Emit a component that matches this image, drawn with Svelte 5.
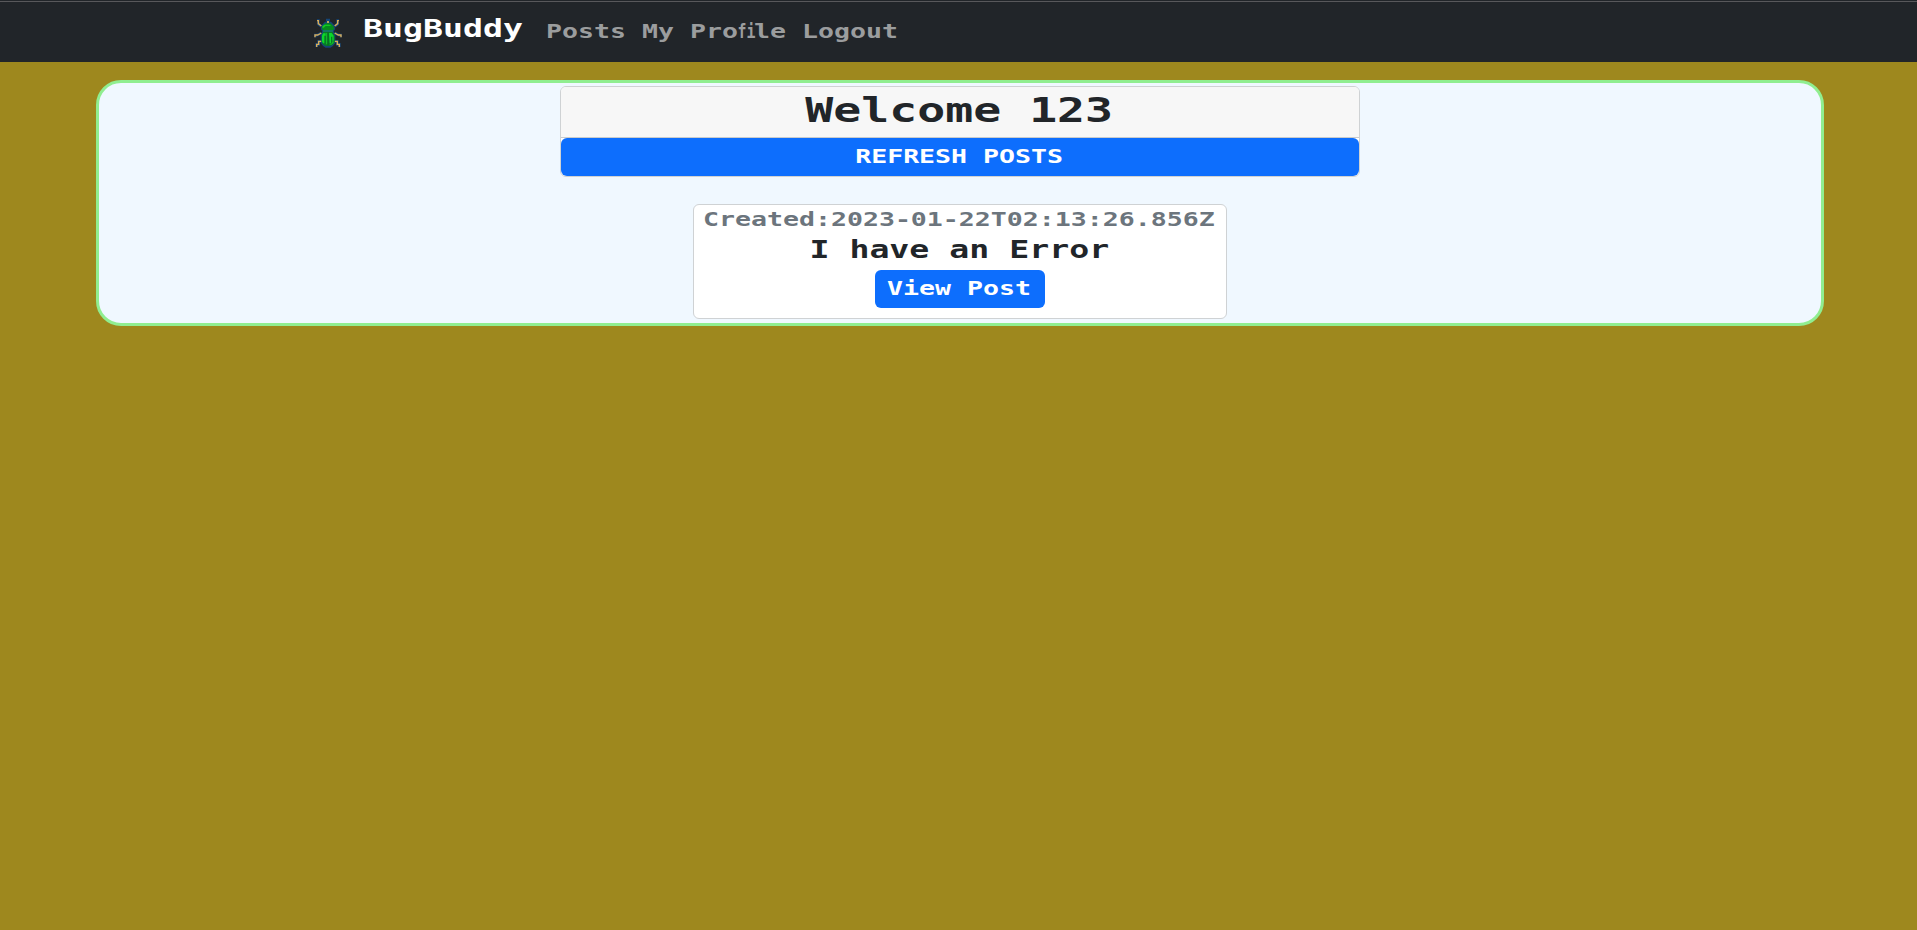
<script>
  const links = ['Posts', 'My Profile', 'Logout'];
  const cells = (text) => text.replace('fi', '_').length;
  const posts = [{ created: '2023-01-22T02:13:26.856Z', title: 'I have an Error' }];
</script>

<nav>
  <a class="brand" href="#home">
    <svg width="32" height="32" viewBox="36 21 96 96" fill="none" aria-hidden="true">
      <g stroke="#154678" stroke-width="8">
        <path d="M51 32h4v10l9 7M117 32h-4v10l-9 7M46 82v-7h7l11-6M122 82v-7h-7l-11-6M50 111v-8h6v-9h8M118 111v-8h-6v-9h-8M78 30h12M84 27v12" />
      </g>
      <path d="M75 35h18l10 11 3 12-5 6 5 12v23l-7 9-8 5H77l-8-5-7-9V76l5-12-5-6 3-12z" fill="#154678" />
      <g stroke="#d9ac58" stroke-width="4.2">
        <path d="M51 32h4v9l9 7M117 32h-4v9l-9 7M45 82v-7h8l11-6M123 82v-7h-8l-11-6M50 111v-8h6v-9h8M118 111v-8h-6v-9h-8" />
      </g>
      <path d="M81 33h6v6h-6z" fill="#b9a45e" />
      <path d="M77 40h14l9 8 3 9-5 3H70l-5-3 3-9z" fill="#078b1d" />
      <path d="M73 44h15l6 4H77l-6 5h-4v-4z" fill="#12ca24" />
      <path d="M70 61h28v6l6 11v19l-7 8-8 3H78l-8-4-5-8V77l5-10z" fill="#087b25" />
      <path d="M69 60h30v6H69z" fill="#147560" />
      <path d="M69 70h8v7h-4v23h-4l-3-6V77zM87 69h8l6 8v15h-4V80h-4v20h-4z" fill="#0bd82b" />
      <path d="M78 69h4v34h-4zM97 94h4v5l-6 5h-6v-3h5z" fill="#12b52a" />
      <path d="M84 67v40" stroke="#056021" stroke-width="2" />
    </svg>
    <span class="brand-name"><span class="wide">BugBuddy</span></span>
  </a>
  <div class="links">
    {#each links as link}
      <a href="#{link}" style:width="{cells(link) * 16}px">
        <span class="wide">{#if link.includes('fi')}{link.split('fi')[0]}<span class="joined">fi</span>{link.split('fi')[1]}{:else}{link}{/if}</span>
      </a>
    {/each}
  </div>
</nav>

<main>
  <section class="welcome">
    <h1><span class="wide">Welcome 123</span></h1>
    <button><span class="wide">REFRESH POSTS</span></button>
  </section>
  {#each posts as post}
    <article>
      <div class="created"><span class="wide">Created:{post.created}</span></div>
      <h2><span class="wide">{post.title}</span></h2>
      <button class="view"><span class="wide">View Post</span></button>
    </article>
  {/each}
</main>

<style>
  :global(body) {
    margin: 0;
    background: #9e881e;
    font-family: "DejaVu Sans Mono", monospace;
    font-size: 16px;
    font-weight: 700;
  }
  nav, main, section, article, h1, h2, button { box-sizing: border-box; }
  a { text-decoration: none; }
  .wide {
    display: inline-block;
    font-size: 1.2em;
    line-height: 1;
    white-space: nowrap;
    transform: translateX(-1px) scaleX(1.384);
  }
  nav .wide { transform-origin: left; }
  .joined {
    display: inline-block;
    width: 0.602em;
    transform: scaleX(0.56);
    transform-origin: left;
  }
  nav {
    display: flex;
    height: 62px;
    padding: 1px 0 0 312px;
    background: linear-gradient(#212529 0 1px, #58585b 1px 2px, #212529 2px);
  }
  .brand {
    display: flex;
    align-items: flex-start;
    gap: 20px;
    padding-top: 16px;
    color: #fff;
  }
  .brand-name {
    width: 183px;
    font-size: 20px;
    line-height: 24px;
  }
  .brand-name .wide { line-height: 24px; }
  .links {
    display: flex;
    gap: 16px;
    padding-top: 21px;
    color: #9b9d9e;
  }
  .links a { color: inherit; }
  main {
    display: flex;
    flex-direction: column;
    align-items: center;
    width: 1728px;
    height: 246px;
    margin: 18px 0 0 96px;
    padding-top: 3px;
    border: 3px solid lightgreen;
    border-radius: 25px;
    background: aliceblue;
  }
  .welcome {
    width: 800px;
    height: 91px;
    border: 1px solid #cfd2d4;
    border-radius: 6px;
    background: #fff;
  }
  h1, h2 {
    margin: 0;
    color: #212529;
    text-align: center;
    font-weight: 700;
  }
  h1 {
    display: flex;
    justify-content: center;
    height: 51px;
    padding-top: 7px;
    border-bottom: 1px solid #c9cbcc;
    border-radius: 5px 5px 0 0;
    background: #f7f7f7;
    font-size: 28px;
  }
  button {
    display: flex;
    justify-content: center;
    align-items: center;
    width: 100%;
    height: 38px;
    padding: 0;
    border: 0;
    border-radius: 6px;
    background: #0d6efd;
    color: #fff;
    font: inherit;
  }
  article {
    display: flex;
    flex-direction: column;
    align-items: center;
    width: 534px;
    height: 115px;
    margin-top: 27px;
    border: 1px solid #cfd2d4;
    border-radius: 6px;
    background: #fff;
  }
  .created {
    height: 24px;
    padding-top: 5px;
    color: #6c757d;
    box-sizing: border-box;
  }
  h2 {
    height: 41px;
    padding-top: 9px;
    font-size: 20px;
  }
  .view { width: 170px; }
</style>
